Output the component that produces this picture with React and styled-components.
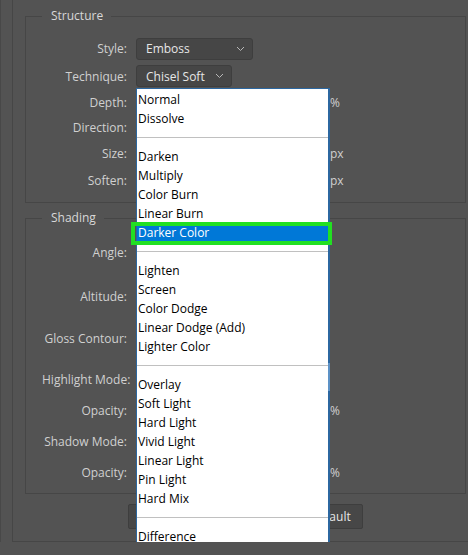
import React from 'react';
import styled, { createGlobalStyle } from 'styled-components';

const GlobalStyle = createGlobalStyle`
  html, body {
    margin: 0;
    padding: 0;
    background: #535353;
    overflow: hidden;
  }
  body {
    font-family: "Open Sans", "Noto Sans", sans-serif;
    font-size: 12px;
  }
`;

const Dialog = styled.div`
  width: 468px;
  height: 542px;
  box-sizing: border-box;
  border-left: 1px solid #484848;
  padding-left: 11px;
`;

const OuterFrame = styled.div`
  width: 456px;
  height: 542px;
  box-sizing: border-box;
  border-left: 1px solid #464646;
  border-bottom: 1px solid #464646;
  padding: 8px 0 0 12px;
`;

const GroupBox = styled.fieldset`
  margin: ${(p) => p.$mt || 0}px 0 0 0;
  width: 441px;
  box-sizing: border-box;
  min-inline-size: 0;
  border: 1px solid #464646;
  padding: ${(p) => p.$pt}px 0 ${(p) => p.$pb}px 16px;
`;

const GroupTitle = styled.legend`
  padding: 0 8px 0 9px;
  line-height: 16px;
  color: #d8d8d8;
  font-size: 12px;
`;

const Row = styled.div`
  display: grid;
  grid-template-columns: 94px 194px auto;
  align-items: center;
  height: ${(p) => p.$h}px;
`;

const Label = styled.div`
  text-align: right;
  padding-right: 9px;
  white-space: nowrap;
  color: #d0d0d0;
`;

const Unit = styled.div`
  color: #d0d0d0;
`;

const SelectBox = styled.div`
  position: relative;
  display: flex;
  align-items: center;
  justify-content: space-between;
  width: ${(p) => p.$w}px;
  height: 22px;
  box-sizing: border-box;
  padding: 0 7px 0 9px;
  background: #464646;
  border: 1px solid #3e3e3e;
  border-radius: 3px;
  color: #e6e6e6;
`;

const Chevron = () => (
  <svg width="9" height="6" viewBox="0 0 9 6">
    <polyline points="1,1 4.5,4.5 8,1" fill="none" stroke="#b8b8b8" strokeWidth="1" />
  </svg>
);

const Menu = styled.div`
  position: absolute;
  top: calc(100% + 2px);
  left: -1px;
  z-index: 10;
  width: 194px;
  height: 470px;
  box-sizing: border-box;
  padding-top: 1px;
  background: #ffffff;
  border: 1px solid #2c67a0;
  border-right-width: 2px;
  border-bottom: none;

  &::after {
    content: '';
    position: absolute;
    right: -2px;
    top: 274px;
    width: 2px;
    height: 28px;
    background: #5d92c6;
  }
`;

const MenuItem = styled.div`
  position: relative;
  height: 19px;
  line-height: 19px;
  padding-left: 1px;
  white-space: nowrap;
  color: ${(p) => (p.$active ? '#ffffff' : '#000000')};
  background: ${(p) => (p.$active ? '#0078d7' : 'transparent')};
`;

const Separator = styled.div`
  height: 19px;
  display: flex;
  align-items: center;

  &::after {
    content: '';
    flex: 1;
    height: 1px;
    background: #c0c0c0;
  }
`;

const Marker = styled.div`
  position: absolute;
  left: -6px;
  right: -4px;
  top: -1px;
  bottom: -3px;
  border: 4px solid #22e022;
  pointer-events: none;
`;

const ButtonRow = styled.div`
  display: flex;
  gap: 8px;
  margin-top: 10px;
  padding-left: 103px;
`;

const Button = styled.div`
  display: flex;
  align-items: center;
  justify-content: center;
  width: ${(p) => p.$w}px;
  height: 25px;
  box-sizing: border-box;
  background: #474747;
  border: 1px solid #3e3e3e;
  border-radius: 2px;
  color: #e6e6e6;
`;

const blendGroups = [
  ['Normal', 'Dissolve'],
  ['Darken', 'Multiply', 'Color Burn', 'Linear Burn', 'Darker Color'],
  ['Lighten', 'Screen', 'Color Dodge', 'Linear Dodge (Add)', 'Lighter Color'],
  ['Overlay', 'Soft Light', 'Hard Light', 'Vivid Light', 'Linear Light', 'Pin Light', 'Hard Mix'],
  ['Difference', 'Exclusion'],
];

const BlendMenu = ({ selected }) => (
  <Menu>
    {blendGroups.map((group, gi) => (
      <React.Fragment key={gi}>
        {gi > 0 && <Separator />}
        {group.map((name) => (
          <MenuItem key={name} $active={name === selected}>
            {name}
            {name === selected && <Marker />}
          </MenuItem>
        ))}
      </React.Fragment>
    ))}
  </Menu>
);

const shadingRows = [
  { label: 'Angle:', h: 42 },
  { label: 'Altitude:', h: 46 },
  { label: 'Gloss Contour:', h: 38 },
  { label: 'Highlight Mode:', h: 44 },
  { label: 'Opacity:', h: 18, unit: '%' },
  { label: 'Shadow Mode:', h: 44 },
  { label: 'Opacity:', h: 18, unit: '%' },
];

export default function App() {
  return (
    <>
      <GlobalStyle />
      <Dialog>
        <OuterFrame>
          <GroupBox $pt={11} $pb={8}>
            <GroupTitle>Structure</GroupTitle>
            <Row $h={27}>
              <Label>Style:</Label>
              <div>
                <SelectBox $w={117}>
                  Emboss
                  <Chevron />
                </SelectBox>
              </div>
            </Row>
            <Row $h={28}>
              <Label>Technique:</Label>
              <div>
                <SelectBox $w={96}>
                  Chisel Soft
                  <Chevron />
                  <BlendMenu selected="Darker Color" />
                </SelectBox>
              </div>
            </Row>
            <Row $h={25}>
              <Label>Depth:</Label>
              <div />
              <Unit>%</Unit>
            </Row>
            <Row $h={25}>
              <Label>Direction:</Label>
            </Row>
            <Row $h={27}>
              <Label>Size:</Label>
              <div />
              <Unit>px</Unit>
            </Row>
            <Row $h={27}>
              <Label>Soften:</Label>
              <div />
              <Unit>px</Unit>
            </Row>
          </GroupBox>

          <GroupBox $mt={7} $pt={5} $pb={12}>
            <GroupTitle>Shading</GroupTitle>
            {shadingRows.map((r, i) => (
              <Row key={i} $h={r.h}>
                <Label>{r.label}</Label>
                <div />
                {r.unit && <Unit>{r.unit}</Unit>}
              </Row>
            ))}
          </GroupBox>

          <ButtonRow>
            <Button $w={113}>Make Default</Button>
            <Button $w={114}>Reset to Default</Button>
          </ButtonRow>
        </OuterFrame>
      </Dialog>
    </>
  );
}
